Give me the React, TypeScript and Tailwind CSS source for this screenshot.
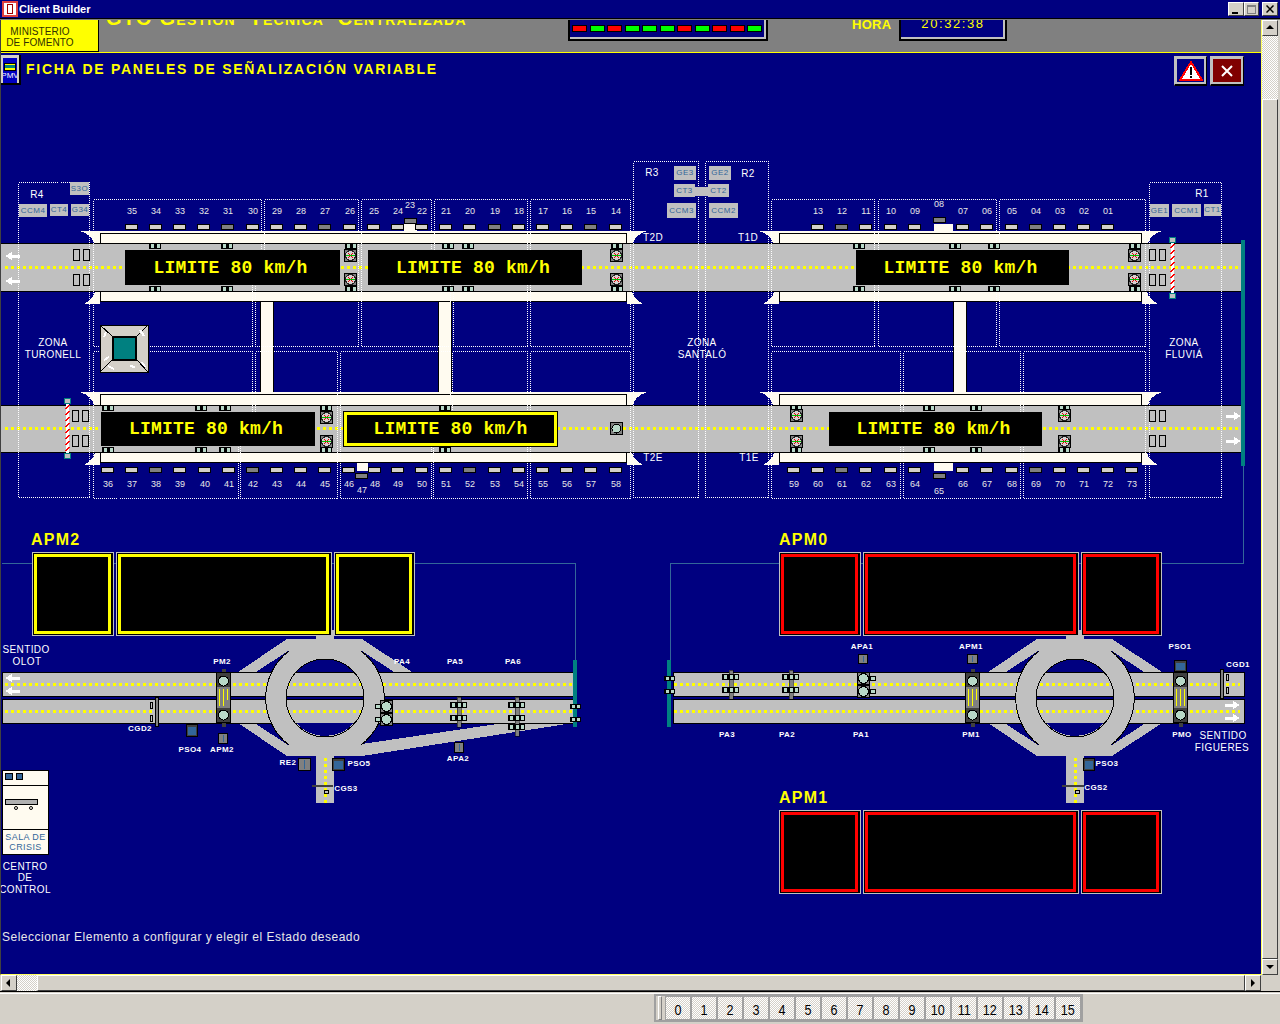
import type { ReactNode } from 'react';

const OX = 1;
const OY = 53;
const NAVY = '#000080';
const ROAD = '#c0c0c0';
const CREAM = '#fffbf0';
const PALE = '#b8d8c8';
const TEAL = '#008080';
const STEEL = '#336699';

// ---- drawing helpers (page coordinates, the root <g> moves them onto the canvas)

function Box({ x1, y1, x2, y2, fill, stroke = '#000' }: { x1: number; y1: number; x2: number; y2: number; fill: string; stroke?: string }) {
  return <rect x={x1 + 0.5} y={y1 + 0.5} width={x2 - x1 - 1} height={y2 - y1 - 1} fill={fill} stroke={stroke} />;
}

function Arrow({ x, y, dir }: { x: number; y: number; dir: 'l' | 'r' }) {
  const pts =
    dir === 'l'
      ? `${x},${y} ${x + 7},${y - 4} ${x + 7},${y - 1} ${x + 15},${y - 1} ${x + 15},${y + 2} ${x + 7},${y + 2} ${x + 7},${y + 4}`
      : `${x + 15},${y} ${x + 8},${y - 4} ${x + 8},${y - 1} ${x},${y - 1} ${x},${y + 2} ${x + 8},${y + 2} ${x + 8},${y + 4}`;
  return <polygon points={pts} fill="#fff" />;
}

function Dots({ x1, x2, y }: { x1: number; x2: number; y: number }) {
  return <line x1={x1} y1={y} x2={x2} y2={y} stroke="#ffff00" strokeWidth={3} strokeDasharray="3 3" />;
}

function Cell({ x, y, w = 12, h = 6, n = 2 }: { x: number; y: number; w?: number; h?: number; n?: number }) {
  const step = w / n;
  return (
    <g>
      <rect x={x} y={y} width={w} height={h} fill="#000" />
      {Array.from({ length: n }, (_, i) => (
        <rect key={i} x={x + 1 + i * step + (step - 4) / 2} y={y + 1} width={3} height={h - 2} fill={PALE} />
      ))}
    </g>
  );
}

function LaneSignal({ x, y }: { x: number; y: number }) {
  return (
    <g>
      <Box x1={x} y1={y} x2={x + 13} y2={y + 13} fill="#808080" />
      <circle cx={x + 6.5} cy={y + 6.5} r={5} fill="#d8d0d0" stroke="#202020" />
      <line x1={x + 4} y1={y + 4} x2={x + 9} y2={y + 9} stroke="#e00000" />
      <line x1={x + 9} y1={y + 4} x2={x + 4} y2={y + 9} stroke="#e00000" />
      <line x1={x + 2} y1={y + 6.5} x2={x + 11} y2={y + 6.5} stroke="#00c000" />
    </g>
  );
}

function LaneMark({ x, y, h = 12 }: { x: number; y: number; h?: number }) {
  return <Box x1={x} y1={y} x2={x + 7} y2={y + h} fill={ROAD} />;
}

function Barrier({ x, top, bottom }: { x: number; top: number; bottom: number }) {
  const ys: number[] = [];
  for (let y = top + 7; y < bottom - 9; y += 6) ys.push(y);
  return (
    <g>
      <rect x={x} y={top + 6} width={3} height={bottom - top - 12} fill="#fff" />
      {ys.map((y) => (
        <line key={y} x1={x} y1={y + 4} x2={x + 3} y2={y} stroke="#ff0000" strokeWidth={1.5} />
      ))}
      <Box x1={x - 2} y1={top} x2={x + 5} y2={top + 6} fill={ROAD} stroke={TEAL} />
      <Box x1={x - 2} y1={bottom - 6} x2={x + 5} y2={bottom} fill={ROAD} stroke={TEAL} />
    </g>
  );
}

// cream strips on both sides of a road stretch, with the flared tunnel mouths
function Strips({ x1, x2, top, bottom, band }: { x1: number; x2: number; top: number; bottom: number; band: number }) {
  const t = top - band;
  return (
    <g>
      <path d={`M${x1 - 20},${t} L${x1},${t} L${x1},${top} L${x1 - 6},${top} Q${x1 - 8},${t + 4} ${x1 - 20},${t} Z`} fill={CREAM} />
      <path d={`M${x2 + 20},${t} L${x2},${t} L${x2},${top} L${x2 + 6},${top} Q${x2 + 8},${t + 4} ${x2 + 20},${t} Z`} fill={CREAM} />
      <path d={`M${x1 - 16},${bottom + 13} L${x1},${bottom + 13} L${x1},${bottom} L${x1 - 5},${bottom} Q${x1 - 6},${bottom + 8} ${x1 - 16},${bottom + 13} Z`} fill={CREAM} />
      <path d={`M${x2 + 16},${bottom + 13} L${x2},${bottom + 13} L${x2},${bottom} L${x2 + 5},${bottom} Q${x2 + 6},${bottom + 8} ${x2 + 16},${bottom + 13} Z`} fill={CREAM} />
      <rect x={x1} y={t} width={x2 - x1} height={band} fill={CREAM} />
      <Box x1={x1} y1={t + 2} x2={x2} y2={top + 1} fill={CREAM} />
      <Box x1={x1} y1={bottom - 1} x2={x2} y2={bottom + 11} fill={CREAM} />
    </g>
  );
}

function Sensor({ x, y, dark }: { x: number; y: number; dark?: boolean }) {
  return <Box x1={x - 7} y1={y} x2={x + 6} y2={y + 6} fill={dark ? '#808080' : '#d4d0c8'} />;
}

function Gantry({ x, tilt }: { x: number; tilt?: boolean }) {
  return (
    <g>
      <rect x={x + 6} y={669} width={4} height={58} fill="#404040" />
      <Box x1={x} y1={672} x2={x + 15} y2={723} fill="#808080" />
      <rect x={x + 1} y={673} width={13} height={14} fill="#404040" />
      <rect x={x + 1} y={708} width={13} height={14} fill="#404040" />
      <circle cx={x + 7.5} cy={681} r={5} fill={PALE} stroke="#000" />
      <circle cx={x + 7.5} cy={715} r={5} fill={PALE} stroke="#000" />
      <line x1={x + 3.5} y1={689} x2={x + 3.5} y2={706} stroke="#ffff00" />
      <line x1={x + 7.5} y1={689} x2={x + 7.5} y2={706} stroke="#ffff00" />
      <line x1={x + 11.5} y1={689} x2={x + 11.5} y2={tilt ? 700 : 706} stroke="#ffff00" />
    </g>
  );
}

function Cluster({ x, y, side }: { x: number; y: number; side: 'l' | 'r' }) {
  const sx = side === 'l' ? x - 5 : x + 13;
  return (
    <g>
      <Box x1={sx} y1={y + 4} x2={sx + 6} y2={y + 9} fill={PALE} />
      <Box x1={sx} y1={y + 17} x2={sx + 6} y2={y + 22} fill={PALE} />
      <Box x1={x} y1={y} x2={x + 13} y2={y + 13} fill="#808080" />
      <Box x1={x} y1={y + 13} x2={x + 13} y2={y + 26} fill="#808080" />
      <circle cx={x + 6.5} cy={y + 6.5} r={5} fill={PALE} stroke="#000" />
      <circle cx={x + 6.5} cy={y + 19.5} r={5} fill={PALE} stroke="#000" />
    </g>
  );
}

function Post({ x, y1, y2, ys }: { x: number; y1: number; y2: number; ys: number[] }) {
  return (
    <g>
      <rect x={x + 7} y={y1} width={4} height={y2 - y1} fill="#808080" stroke="#000" strokeWidth={0.5} />
      {ys.map((y) => (
        <Cell key={y} x={x} y={y} w={17} h={6} n={3} />
      ))}
    </g>
  );
}

function Device({ x1, y1, x2, y2, blue }: { x1: number; y1: number; x2: number; y2: number; blue?: boolean }) {
  return (
    <g>
      <Box x1={x1} y1={y1} x2={x2} y2={y2} fill={blue ? '#404040' : '#808080'} />
      {blue ? (
        <rect x={x1 + 2} y={y1 + 3} width={x2 - x1 - 4} height={y2 - y1 - 5} fill={STEEL} />
      ) : (
        <line x1={(x1 + x2) / 2} y1={y1 + 2} x2={(x1 + x2) / 2} y2={y2 - 2} stroke={STEEL} />
      )}
    </g>
  );
}

function Roundabout({ cx, ramp }: { cx: number; ramp?: boolean }) {
  const upper = [-1, 1].map((s) => `${cx + s * 37},651 ${cx + s * 69},672 ${cx + s * 37},672`);
  return (
    <g>
      <rect x={cx - 9} y={630} width={18} height={10} fill={ROAD} />
      <polygon points={`${cx - 38},639 ${cx + 37},639 ${cx + 87},672 ${cx + 87},723 ${cx + 37},756 ${cx - 38},756 ${cx - 87},723 ${cx - 87},672`} fill={ROAD} />
      {ramp && <polygon points={`${cx + 37},756 573,723 ${cx + 37},723`} fill={ROAD} />}
      {upper.map((p) => (
        <polygon key={p} points={p} fill={NAVY} />
      ))}
      <polygon points={`${cx - 37},745 ${cx - 69},724 ${cx - 37},724`} fill={NAVY} />
      {ramp ? (
        <polygon points={`${cx + 37},744 497,724 ${cx + 37},724`} fill={NAVY} />
      ) : (
        <polygon points={`${cx + 37},745 ${cx + 69},724 ${cx + 37},724`} fill={NAVY} />
      )}
      <rect x={cx - 90} y={696} width={180} height={3} fill={NAVY} />
    </g>
  );
}

function RoundaboutRing({ cx }: { cx: number }) {
  return (
    <g>
      <circle cx={cx} cy={698} r={49} fill="none" stroke={ROAD} strokeWidth={20} />
      <path d={`M${cx - 29},672 A39 39 0 0 1 ${cx + 29},672 Z`} fill={NAVY} />
      <path d={`M${cx - 29},723 A39 39 0 0 0 ${cx + 29},723 Z`} fill={NAVY} />
      <circle cx={cx} cy={698} r={39} fill="none" stroke="#000" />
      <path d={`M${cx - 36},651 A59 59 0 0 0 ${cx - 36},745`} fill="none" stroke="#000" />
      <path d={`M${cx + 36},651 A59 59 0 0 1 ${cx + 36},745`} fill="none" stroke="#000" />
    </g>
  );
}

// ---- data

type Sn = [string, number, number?, boolean?];
const topSensors: Sn[] = [
  ['35', 132], ['34', 156], ['33', 180], ['32', 204], ['31', 228, 0, true], ['30', 253], ['29', 277], ['28', 301], ['27', 325, 0, true], ['26', 350],
  ['25', 374], ['24', 398], ['22', 422], ['21', 446], ['20', 470], ['19', 495, 0, true], ['18', 519], ['17', 543], ['16', 567], ['15', 591, 0, true], ['14', 616],
  ['13', 818], ['12', 842, 0, true], ['11', 866], ['10', 891], ['09', 915], ['07', 963], ['06', 987], ['05', 1012], ['04', 1036, 0, true], ['03', 1060], ['02', 1084], ['01', 1108],
];
const bottomSensors: Sn[] = [
  ['36', 108], ['37', 132], ['38', 156, 0, true], ['39', 180], ['40', 205], ['41', 229], ['42', 253, 0, true], ['43', 277], ['44', 301], ['45', 325], ['46', 349],
  ['48', 375], ['49', 398], ['50', 422], ['51', 446], ['52', 470, 0, true], ['53', 495], ['54', 519], ['55', 543], ['56', 567], ['57', 591], ['58', 616],
  ['59', 794], ['60', 818], ['61', 842, 0, true], ['62', 866], ['63', 891], ['64', 915], ['66', 963], ['67', 987], ['68', 1012], ['69', 1036, 0, true], ['70', 1060], ['71', 1084], ['72', 1108], ['73', 1132],
];

// the steps in these outlines are hidden behind the message panels
const zones: number[][] = [
  [18, 182, 89, 182, 89, 497, 18, 497],
  [93, 199, 261, 199, 261, 267, 252, 267, 252, 346, 93, 346],
  [264, 199, 358, 199, 358, 346, 255, 346, 255, 267, 264, 267],
  [361, 199, 431, 199, 431, 267, 450, 267, 450, 346, 361, 346],
  [434, 199, 527, 199, 527, 346, 453, 346, 453, 267, 434, 267],
  [530, 199, 630, 199, 630, 346, 530, 346],
  [93, 351, 252, 351, 252, 430, 238, 430, 238, 498, 93, 498],
  [255, 351, 337, 351, 337, 498, 240, 498, 240, 430, 255, 430],
  [340, 351, 450, 351, 450, 430, 431, 430, 431, 498, 340, 498],
  [452, 351, 527, 351, 527, 498, 433, 498, 433, 430, 452, 430],
  [530, 351, 630, 351, 630, 498, 530, 498],
  [633, 161, 698, 161, 698, 497, 633, 497],
  [705, 161, 768, 161, 768, 497, 705, 497],
  [771, 199, 874, 199, 874, 346, 771, 346],
  [878, 199, 996, 199, 996, 346, 878, 346],
  [999, 199, 1145, 199, 1145, 346, 999, 346],
  [771, 351, 900, 351, 900, 498, 771, 498],
  [903, 351, 1020, 351, 1020, 498, 903, 498],
  [1023, 351, 1145, 351, 1145, 498, 1023, 498],
  [1149, 182, 1221, 182, 1221, 497, 1149, 497],
];

const topCells = [149, 221, 345, 442, 462, 611, 853, 949, 988, 1129];
const bottomCells = [102, 195, 219, 320, 439, 790, 923, 970, 1058];
const topSignals = [344, 610, 1128];
const bottomSignals: [number, number][] = [[320, 411], [790, 409], [1058, 409]];

const vmsPanels = [
  { x: 125, y: 250, w: 215, h: 35 },
  { x: 368, y: 250, w: 214, h: 35 },
  { x: 856, y: 250, w: 213, h: 35 },
  { x: 101, y: 412, w: 214, h: 34 },
  { x: 344, y: 412, w: 213, h: 34, selected: true },
  { x: 829, y: 412, w: 213, h: 34 },
];

const grayTags: [string, number, number, number, number][] = [
  ['S3O', 70, 182, 89, 195], ['CCM4', 19, 204, 47, 217], ['CT4', 50, 204, 68, 216], ['G34', 71, 204, 89, 216],
  ['GE3', 674, 166, 696, 180], ['CT3', 674, 184, 695, 197], ['CCM3', 667, 203, 696, 218],
  ['GE2', 709, 166, 731, 180], ['CT2', 708, 184, 729, 197], ['CCM2', 709, 203, 738, 218],
  ['GE1', 1150, 204, 1169, 217], ['CCM1', 1172, 204, 1201, 217], ['CT1', 1204, 204, 1221, 216],
];

const plainLabels: [string, number, number][] = [
  ['R4', 37, 195], ['R3', 652, 173], ['R2', 748, 174], ['R1', 1202, 194],
  ['T2D', 653, 238], ['T1D', 748, 238], ['T2E', 653, 458], ['T1E', 749, 458],
  ['ZONA', 53, 343], ['TURONELL', 53, 355], ['ZONA', 702, 343], ['SANTALÓ', 702, 355], ['ZONA', 1184, 343], ['FLUVIÁ', 1184, 355],
  ['SENTIDO', 26, 650], ['OLOT', 27, 662], ['SENTIDO', 1223, 736], ['FIGUERES', 1222, 748],
  ['CENTRO', 25, 867], ['DE', 25, 878], ['CONTROL', 25, 890],
];

const tinyLabels: [string, number, number][] = [
  ['PM2', 222, 662], ['CGD2', 140, 729], ['PSO4', 190, 750], ['APM2', 222, 750], ['RE2', 288, 763],
  ['PA4', 402, 662], ['PA5', 455, 662], ['PA6', 513, 662], ['APA2', 458, 759], ['PSO5', 359, 764], ['CGS3', 346, 789],
  ['APA1', 862, 647], ['APM1', 971, 647], ['PSO1', 1180, 647], ['CGD1', 1238, 665],
  ['PA3', 727, 735], ['PA2', 787, 735], ['PA1', 861, 735], ['PM1', 971, 735], ['PMO', 1182, 735],
  ['PSO3', 1107, 764], ['CGS2', 1096, 788],
];

// ---- DOM pieces

function At({ x, y, className, children }: { x: number; y: number; className: string; children: ReactNode }) {
  return (
    <div className={`absolute -translate-x-1/2 -translate-y-1/2 whitespace-nowrap ${className}`} style={{ left: x - OX, top: y - OY }}>
      {children}
    </div>
  );
}

function VmsPanel({ x, y, w, h, selected }: { x: number; y: number; w: number; h: number; selected?: boolean }) {
  return (
    <div
      className={`absolute flex items-center justify-center bg-black font-['Liberation_Mono',monospace] text-[18px] leading-none font-bold tracking-[0.2px] text-[#ffff00] ${
        selected ? 'border-[3px] border-[#ffff00] outline outline-1 outline-black' : 'pr-[4px]'
      }`}
      style={{ left: x - OX, top: y - OY, width: w, height: h }}
    >
      LIMITE 80 km/h
    </div>
  );
}

function ApmGroup({ label, x, y, accent }: { label: string; x: number; y: number; accent: 'yellow' | 'red' }) {
  const inner = accent === 'red' ? 'border-[#ff0000]' : 'border-[#ffff00]';
  return (
    <>
      <div
        className="absolute font-['Liberation_Sans',sans-serif] text-[16px] leading-none font-bold tracking-[1.2px] text-[#ffff00]"
        style={{ left: x - OX - 1 + (accent === 'red' ? 1 : 0), top: y - OY - 20 }}
      >
        {label}
      </div>
      <div className="absolute flex h-[84px] w-[383px] gap-[2px]" style={{ left: x - OX, top: y - OY }}>
        {[82, 216, 81].map((w) => (
          <div key={w} className="h-full border border-[#c0c0c0] bg-black pt-[1px] pr-[2px] pb-[1px] pl-[1px]" style={{ width: w }}>
            <div className={`h-full border-[3px] ${inner}`} />
          </div>
        ))}
      </div>
    </>
  );
}

function ControlCentre() {
  return (
    <div className="absolute top-[717px] left-[1px] flex h-[85px] w-[47px] flex-col border border-black bg-[#fffbf0]">
      <div className="flex h-[15px] gap-[3px] border-b border-black pt-[2px] pl-[2px]">
        <span className="h-[7px] w-[8px] border border-black bg-[#336699]" />
        <span className="h-[7px] w-[7px] border border-black bg-[#336699]" />
      </div>
      <div className="h-[43px] pt-[13px] pl-[2px]">
        <div className="h-[6px] w-[33px] border border-black bg-[#b0b0b0]" />
        <div className="mt-[1px] flex gap-[11px] pl-[9px]">
          <span className="h-[4px] w-[4px] rounded-full border border-black" />
          <span className="h-[4px] w-[4px] rounded-full border border-black" />
        </div>
      </div>
      <div className="flex flex-1 flex-col items-center justify-center border-t border-black font-['Liberation_Sans',sans-serif] text-[9px] leading-[10px] tracking-[0.4px] text-[#336699]">
        <span>SALA DE</span>
        <span>CRISIS</span>
      </div>
    </div>
  );
}

function Diagram() {
  return (
    <svg className="absolute inset-0" width={1261} height={922} shapeRendering="crispEdges">
      <g transform={`translate(${-OX},${-OY})`}>
        {/* pillars */}
        {[260, 438, 953].map((x) => (
          <Box key={x} x1={x} y1={298} x2={x + 14} y2={396} fill={CREAM} />
        ))}

        {/* upper carriageway */}
        <Strips x1={100} x2={627} top={243} bottom={291} band={12} />
        <Strips x1={779} x2={1142} top={243} bottom={291} band={12} />
        <rect x={1} y={243} width={1241} height={49} fill={ROAD} />
        <rect x={1} y={243} width={1241} height={1} fill="#000" />
        <rect x={1} y={291} width={1241} height={1} fill="#000" />
        <Dots x1={5} x2={1238} y={267} />

        {/* lower carriageway */}
        <Strips x1={100} x2={627} top={405} bottom={452} band={13} />
        <Strips x1={779} x2={1142} top={405} bottom={452} band={13} />
        <rect x={1} y={405} width={1241} height={48} fill={ROAD} />
        <rect x={1} y={405} width={1241} height={1} fill="#000" />
        <rect x={1} y={452} width={1241} height={1} fill="#000" />
        <Dots x1={5} x2={1238} y={428} />

        {/* pedestals of raised sensors */}
        <rect x={404} y={224} width={13} height={8} fill={CREAM} />
        <rect x={934} y={224} width={19} height={8} fill={CREAM} />
        <rect x={357} y={463} width={11} height={8} fill={CREAM} />
        <rect x={934} y={463} width={19} height={8} fill={CREAM} />

        {/* numbered sensors */}
        {topSensors.map(([n, x, , dark]) => (
          <Sensor key={n} x={x} y={224} dark={dark} />
        ))}
        {bottomSensors.map(([n, x, , dark]) => (
          <Sensor key={n} x={x} y={467} dark={dark} />
        ))}
        <Sensor x={411} y={218} dark />
        <Sensor x={940} y={217} dark />
        <Sensor x={362} y={473} dark />
        <Sensor x={940} y={473} dark />

        {/* zones, over the roads */}
        <g transform="translate(0.5,0.5)" fill="none" stroke="#ffffff" strokeDasharray="1 1">
          {zones.map((z) => (
            <polygon key={z.join()} points={z.join(' ')} />
          ))}
        </g>

        <rect x={695} y={187} width={13} height={9} fill={ROAD} />

        {/* lane marks, barriers, arrows */}
        {[73, 83, 1149, 1159].flatMap((x) => [
          <LaneMark key={`${x}a`} x={x} y={249} />,
          <LaneMark key={`${x}b`} x={x} y={274} />,
        ])}
        {[72, 82, 1149, 1159].flatMap((x) => [
          <LaneMark key={`${x}c`} x={x} y={410} />,
          <LaneMark key={`${x}d`} x={x} y={435} />,
        ])}
        <Barrier x={1171} top={237} bottom={299} />
        <Barrier x={66} top={398} bottom={459} />
        <Arrow x={5} y={256} dir="l" />
        <Arrow x={5} y={281} dir="l" />
        <Arrow x={1226} y={416} dir="r" />
        <Arrow x={1226} y={441} dir="r" />

        {/* signal heads */}
        {topCells.flatMap((x) => [<Cell key={`${x}t`} x={x} y={243} />, <Cell key={`${x}b`} x={x} y={286} />])}
        {bottomCells.flatMap((x) => [<Cell key={`${x}t`} x={x} y={405} />, <Cell key={`${x}b`} x={x} y={447} />])}
        {topSignals.flatMap((x) => [<LaneSignal key={`${x}t`} x={x} y={249} />, <LaneSignal key={`${x}b`} x={x} y={273} />])}
        {bottomSignals.flatMap(([x, y]) => [<LaneSignal key={`${x}t`} x={x} y={y} />, <LaneSignal key={`${x}b`} x={x} y={435} />])}
        <Box x1={610} y1={422} x2={623} y2={435} fill="#808080" />
        <circle cx={616.5} cy={428.5} r={4.5} fill={PALE} stroke="#000" />

        {/* tunnel services block */}
        <rect x={100} y={325} width={48} height={47} fill="#d4d0c8" stroke="#000" />
        <path d="M100,325 L112,336 M148,325 L137,336 M100,372 L112,360 M148,372 L137,360" stroke="#000" />
        <path d="M104,360 l5,-3 M108,366 l6,3 M140,330 l4,6 M142,362 l3,5 M130,366 l5,1 M106,332 l-2,5" stroke="#fff" strokeWidth={2} />
        <rect x={113} y={337} width={23} height={23} fill={TEAL} stroke="#000" strokeWidth={2} />

        {/* teal end bars and feeder lines */}
        <rect x={1241} y={240} width={4} height={226} fill={TEAL} />
        <path d="M1.5,563.5 H575.5 V660 M670.5,660 V563.5 H1243.5 V466" fill="none" stroke={STEEL} />

        {/* motorway, west half */}
        <Roundabout cx={325} ramp />
        <Box x1={2} y1={672} x2={574} y2={697} fill={ROAD} />
        <Box x1={2} y1={699} x2={574} y2={724} fill={ROAD} />
        <Dots x1={5} x2={572} y={684} />
        <Dots x1={5} x2={572} y={711} />
        <RoundaboutRing cx={325} />
        <rect x={316} y={756} width={18} height={47} fill={ROAD} />
        <line x1={325} y1={758} x2={325} y2={803} stroke="#ffff00" strokeWidth={3} strokeDasharray="3 3" />
        <rect x={312} y={785} width={21} height={2} fill="#404040" />
        <Box x1={324} y1={790} x2={329} y2={794} fill={ROAD} />
        <rect x={573} y={660} width={4} height={67} fill={TEAL} />
        <Arrow x={5} y={678} dir="l" />
        <Arrow x={5} y={691} dir="l" />
        <Box x1={155} y1={697} x2={159} y2={727} fill="#808080" />
        <Box x1={150} y1={702} x2={153} y2={709} fill={ROAD} />
        <Box x1={150} y1={715} x2={153} y2={722} fill={ROAD} />
        <Gantry x={216} tilt />
        <Cluster x={380} y={700} side="l" />
        <Post x={450} y1={697} y2={727} ys={[702, 715]} />
        <Post x={508} y1={697} y2={736} ys={[702, 715, 724]} />
        <Cell x={570} y={704} w={11} h={5} />
        <Cell x={570} y={717} w={11} h={5} />
        <Device x1={186} y1={724} x2={198} y2={737} blue />
        <Device x1={218} y1={733} x2={228} y2={744} />
        <Device x1={298} y1={758} x2={311} y2={771} />
        <Device x1={332} y1={758} x2={345} y2={771} blue />
        <Device x1={454} y1={742} x2={464} y2={753} />

        {/* motorway, east half */}
        <Roundabout cx={1075} />
        <Box x1={673} y1={672} x2={1245} y2={697} fill={ROAD} />
        <Box x1={673} y1={699} x2={1245} y2={724} fill={ROAD} />
        <Dots x1={674} x2={1240} y={684} />
        <Dots x1={674} x2={1240} y={711} />
        <RoundaboutRing cx={1075} />
        <rect x={1066} y={756} width={18} height={47} fill={ROAD} />
        <line x1={1075} y1={758} x2={1075} y2={803} stroke="#ffff00" strokeWidth={3} strokeDasharray="3 3" />
        <rect x={1062} y={785} width={22} height={2} fill="#404040" />
        <Box x1={1075} y1={790} x2={1080} y2={794} fill={ROAD} />
        <rect x={667} y={660} width={4} height={67} fill={TEAL} />
        <Arrow x={1225} y={705} dir="r" />
        <Arrow x={1225} y={718} dir="r" />
        <Box x1={1220} y1={669} x2={1224} y2={699} fill="#808080" />
        <Box x1={1226} y1={674} x2={1229} y2={681} fill={ROAD} />
        <Box x1={1226} y1={687} x2={1229} y2={694} fill={ROAD} />
        <Cell x={664} y={676} w={11} h={5} />
        <Cell x={664} y={689} w={11} h={5} />
        <Post x={722} y1={670} y2={699} ys={[674, 687]} />
        <Post x={782} y1={670} y2={699} ys={[674, 687]} />
        <Cluster x={857} y={672} side="r" />
        <Gantry x={965} tilt />
        <Gantry x={1173} />
        <Device x1={858} y1={654} x2={868} y2={664} />
        <Device x1={967} y1={654} x2={978} y2={664} />
        <Device x1={1174} y1={660} x2={1187} y2={672} blue />
        <Device x1={1083} y1={758} x2={1095} y2={771} blue />
      </g>
    </svg>
  );
}

function Canvas() {
  return (
    <div className="relative flex-1 overflow-hidden bg-[#000080] font-['Liberation_Sans',sans-serif]">
      {/* page title row */}
      <div className="absolute top-[2px] left-0 flex h-[30px] w-[20px] flex-col items-center border-r-2 border-b-2 border-black border-t-[#c0c0c0] bg-[#d4d0c8] pt-[3px] pr-[2px] pl-[2px]">
        <div className="flex h-full w-full flex-col items-center overflow-hidden bg-[#0000c0]">
          <div className="mt-[5px] h-[8px] w-[12px] border border-black bg-[#ffff00]">
            <div className="mt-[1px] h-[3px] bg-[#008080]" />
          </div>
          <span className="mt-[1px] text-[8px] leading-none text-white">PMV</span>
        </div>
      </div>
      <h1 className="absolute top-[8px] left-[25px] text-[14px] leading-[16px] font-bold tracking-[1.72px] whitespace-nowrap text-[#ffff00]">
        FICHA DE PANELES DE SEÑALIZACIÓN VARIABLE
      </h1>
      <div className="absolute top-[3px] left-[1173px] flex gap-[3px]">
        <div className="flex h-[30px] w-[33px] items-center justify-center border border-b-2 border-[#c0c0c0] border-r-black border-b-black bg-[#000080] shadow-[inset_0_0_0_2px_#c0c0c0]">
          <svg width="24" height="20" viewBox="0 0 24 20" shapeRendering="crispEdges">
            <polygon points="12,1 23,19 1,19" fill="#fff" stroke="#ff0000" strokeWidth="2" />
            <rect x="11" y="6" width="2" height="8" fill="#000" />
            <rect x="11" y="15" width="2" height="2" fill="#000" />
          </svg>
        </div>
        <div className="flex h-[30px] w-[34px] items-center justify-center border border-b-2 border-[#c0c0c0] border-r-black border-b-black bg-[#800000] shadow-[inset_0_0_0_2px_#c0c0c0]">
          <svg width="12" height="12" viewBox="0 0 12 12">
            <path d="M1,1 L11,11 M11,1 L1,11" stroke="#fff" strokeWidth="2" />
          </svg>
        </div>
      </div>

      <Diagram />

      {/* carriageway message panels */}
      {vmsPanels.map((p) => (
        <VmsPanel key={`${p.x}-${p.y}`} {...p} />
      ))}

      {/* numbered sensor labels */}
      {topSensors.map(([n, x]) => (
        <At key={n} x={x} y={211} className="text-[9px] leading-none text-[#e8e8e8]">
          {n}
        </At>
      ))}
      {bottomSensors.map(([n, x]) => (
        <At key={n} x={x} y={484} className="text-[9px] leading-none text-[#e8e8e8]">
          {n}
        </At>
      ))}
      <At x={410} y={205} className="text-[9px] leading-none text-[#e8e8e8]">23</At>
      <At x={939} y={204} className="text-[9px] leading-none text-[#e8e8e8]">08</At>
      <At x={362} y={490} className="text-[9px] leading-none text-[#e8e8e8]">47</At>
      <At x={939} y={491} className="text-[9px] leading-none text-[#e8e8e8]">65</At>

      {/* equipment tags */}
      {grayTags.map(([t, x1, y1, x2, y2]) => (
        <div
          key={t}
          className="absolute flex items-center justify-center bg-[#c0c0c0] text-[8px] leading-none tracking-[0.5px] text-[#336699]"
          style={{ left: x1 - OX, top: y1 - OY, width: x2 - x1, height: y2 - y1 }}
        >
          {t}
        </div>
      ))}

      {plainLabels.map(([t, x, y]) => (
        <At key={`${t}${x}${y}`} x={x} y={y} className="text-[10px] leading-none tracking-[0.4px] text-white">
          {t}
        </At>
      ))}
      {tinyLabels.map(([t, x, y]) => (
        <At key={t} x={x} y={y} className="text-[8px] leading-none font-bold tracking-[0.4px] text-white">
          {t}
        </At>
      ))}

      <ApmGroup label="APM2" x={32} y={552} accent="yellow" />
      <ApmGroup label="APM0" x={779} y={552} accent="red" />
      <ApmGroup label="APM1" x={779} y={810} accent="red" />
      <ControlCentre />

      <p className="absolute top-[877px] left-[1px] text-[12px] leading-[14px] tracking-[0.5px] whitespace-nowrap text-[#e8e8e8]">
        Seleccionar Elemento a configurar y elegir el Estado deseado
      </p>
    </div>
  );
}

function StatusHeader() {
  const leds = ['r', 'g', 'r', 'g', 'g', 'g', 'r', 'g', 'r', 'r', 'g'];
  return (
    <header className="flex h-[32px] shrink-0 items-start overflow-hidden bg-[#808080] font-['Liberation_Sans',sans-serif]">
      <div className="flex h-[32px] w-[98px] shrink-0 flex-col items-center border-r border-b border-black bg-[#ffff00] pt-[6px] pr-[19px] text-[10px] leading-[11px] tracking-[0.1px] whitespace-nowrap text-[#303000]">
        <span>MINISTERIO</span>
        <span>DE FOMENTO</span>
      </div>
      <div className="-mt-[12px] ml-[7px] w-[462px] shrink-0 text-[20px] leading-[20px] font-bold tracking-[1.25px] whitespace-pre text-[#ffff00] [font-variant-caps:small-caps]">
        GTO Gestión  Técnica  Centralizada
      </div>
      <div className="flex h-[21px] w-[200px] shrink-0 items-start gap-[2.5px] border-r-2 border-b-2 border-l-2 border-black bg-[#000080] pt-[5px] pl-[2px] shadow-[inset_-2px_-2px_0_#c0c0c0]">
        {leds.map((c, i) => (
          <span key={i} className={`h-[7px] w-[15px] border border-black ${c === 'r' ? 'bg-[#ff0000]' : 'bg-[#00ff00]'}`} />
        ))}
      </div>
      <div className="-mt-[2px] ml-[84px] w-[47px] shrink-0 text-[13px] leading-[14px] font-bold tracking-[0.3px] text-[#ffff00]">HORA</div>
      <div className="flex h-[21px] w-[108px] shrink-0 justify-center border-r-2 border-b-2 border-l-2 border-black bg-[#000080] shadow-[inset_-2px_-2px_0_#c0c0c0]">
        <span className="-mt-[3px] text-[13px] leading-[14px] tracking-[1.6px] text-[#ffff00]">20:32:38</span>
      </div>
    </header>
  );
}

function WinButton({ children, className = '' }: { children: ReactNode; className?: string }) {
  return (
    <div className={`flex items-center justify-center border border-t-white border-r-[#404040] border-b-[#404040] border-l-white bg-[#d4d0c8] ${className}`}>
      {children}
    </div>
  );
}

function TitleBar() {
  return (
    <div className="flex h-[18px] shrink-0 items-center bg-[#000080] pl-[2px] font-['Liberation_Sans',sans-serif]">
      <div className="flex h-[16px] w-[16px] items-center justify-center border-2 border-[#e04040] bg-white">
        <span className="h-[10px] w-[6px] border border-[#a00000]" />
      </div>
      <span className="ml-[1px] text-[11px] font-bold text-white">Client Builder</span>
      <div className="ml-auto mr-[2px] flex items-center">
        <WinButton className="h-[14px] w-[16px]">
          <span className="mt-[7px] mr-[2px] h-[2px] w-[6px] bg-black" />
        </WinButton>
        <WinButton className="h-[14px] w-[15px]">
          <span className="h-[9px] w-[9px] border border-t-2 border-[#808080]" />
        </WinButton>
        <WinButton className="ml-[3px] h-[14px] w-[16px]">
          <svg width="8" height="8" viewBox="0 0 8 8">
            <path d="M0.5,0.5 L7.5,7.5 M7.5,0.5 L0.5,7.5" stroke="#000" strokeWidth="1.5" />
          </svg>
        </WinButton>
      </div>
    </div>
  );
}

const DITHER = 'bg-[repeating-conic-gradient(#ffffff_0_25%,#d4d0c8_0_50%)] bg-[length:2px_2px]';

function Triangle({ dir }: { dir: 'u' | 'd' | 'l' | 'r' }) {
  const pts = { u: '0,5 8,5 4,1', d: '0,2 8,2 4,6', l: '5,0 5,8 1,4', r: '2,0 2,8 6,4' }[dir];
  return (
    <svg width="8" height="8" viewBox="0 0 8 8">
      <polygon points={pts} fill="#000" />
    </svg>
  );
}

function Toolbar() {
  const btns = Array.from({ length: 16 }, (_, i) => i);
  return (
    <div className="flex h-[31px] shrink-0 items-start border-t border-white bg-[#d4d0c8] pl-[654px]">
      <div className="flex h-[28px] w-[429px] items-center border-2 border-[#a0a0a0] pl-[2px] font-['Liberation_Sans',sans-serif]">
        <span className="mr-[3px] h-[24px] w-[4px] border border-t-white border-r-[#808080] border-b-[#808080] border-l-white" />
        {btns.map((n) => (
          <div
            key={n}
            className={`flex h-[24px] w-[26px] shrink-0 items-center justify-center border border-[#a0a0a0] text-[14px] leading-none text-black ${DITHER}`}
          >
            <span className="mt-[3px] inline-block scale-x-90">{n}</span>
          </div>
        ))}
      </div>
    </div>
  );
}

export default function App() {
  return (
    <div className="flex h-[1024px] w-[1280px] flex-col overflow-hidden bg-[#d4d0c8]">
      <TitleBar />
      <div className="h-[2px] shrink-0 border-t border-black bg-[#808080]" />
      <div className="flex min-h-0 flex-1 flex-col">
        <div className="flex min-h-0 flex-1 pr-[2px]">
          <div className="flex w-[1261px] shrink-0 flex-col border-b border-l border-[#ffff60] border-l-[#404040]">
            <StatusHeader />
            <div className="h-px shrink-0 bg-[#ffff00]" />
            <Canvas />
          </div>
          {/* vertical scrollbar */}
          <div className="flex w-[17px] shrink-0 flex-col border-l border-[#ffff60]">
            <WinButton className="h-[16px] shrink-0"><Triangle dir="u" /></WinButton>
            <div className={`h-[63px] shrink-0 ${DITHER}`} />
            <div className="flex-1 border border-t-white border-r-[#404040] border-b-[#404040] border-l-white bg-[#d4d0c8]" />
            <WinButton className="h-[16px] shrink-0"><Triangle dir="d" /></WinButton>
          </div>
        </div>
        {/* horizontal scrollbar */}
        <div className="flex h-[17px] shrink-0 border-b border-black pr-[19px] pl-[1px]">
          <WinButton className="w-[16px] shrink-0"><Triangle dir="l" /></WinButton>
          <div className={`w-[20px] shrink-0 ${DITHER}`} />
          <div className="flex-1 border border-t-white border-r-[#404040] border-b-[#404040] border-l-white bg-[#d4d0c8]" />
          <WinButton className="w-[16px] shrink-0"><Triangle dir="r" /></WinButton>
        </div>
        <div className="h-[1px] shrink-0" />
        <Toolbar />
      </div>
    </div>
  );
}
